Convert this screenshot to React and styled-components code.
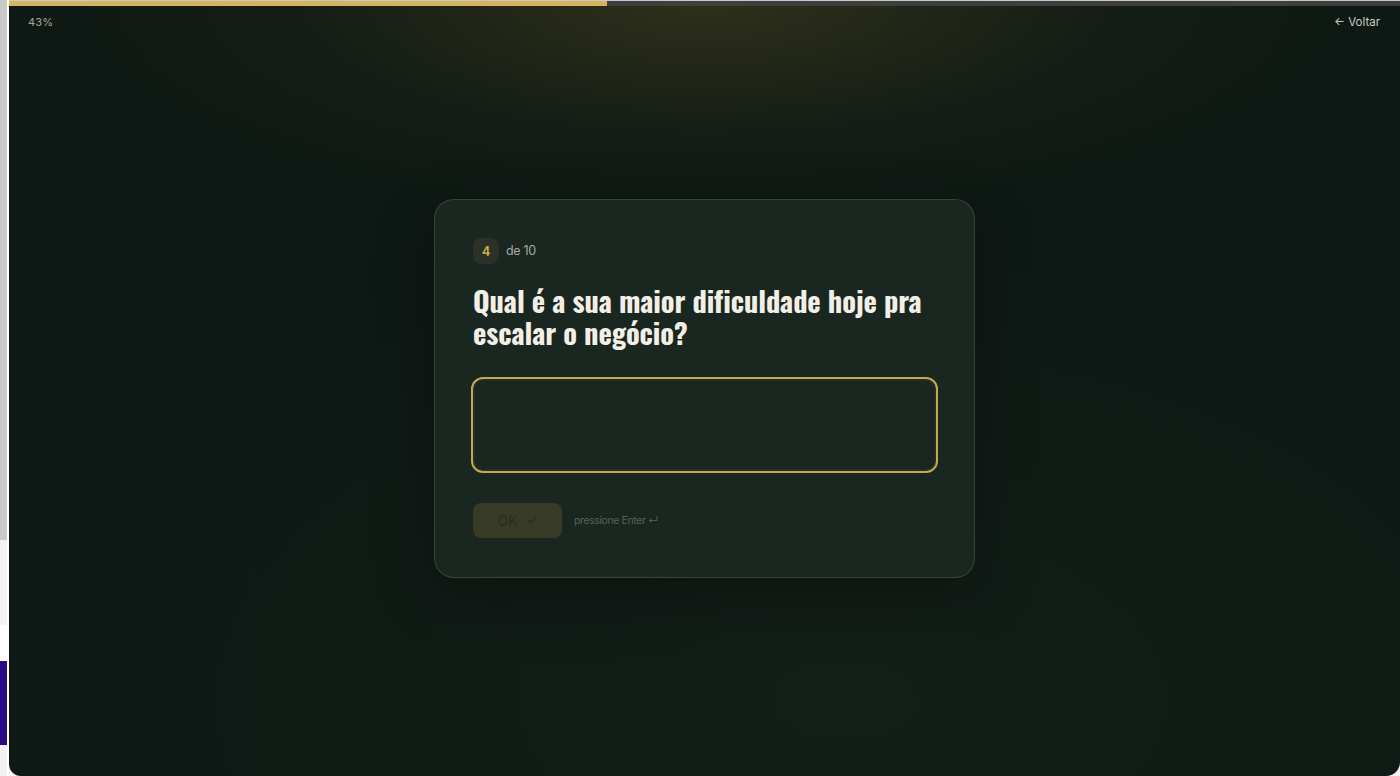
import React, { useState } from "react";
import styled, { createGlobalStyle } from "styled-components";

const GlobalStyle = createGlobalStyle`
  html, body, #root {
    margin: 0;
    padding: 0;
    height: 100%;
  }
  body {
    background: #f4f4f4;
    font-family: Inter, "Noto Sans", sans-serif;
    overflow: hidden;
  }
  * {
    box-sizing: border-box;
  }
`;

const Screen = styled.div`
  display: flex;
  height: 776px;
  width: 1400px;
`;

const Desktop = styled.div`
  width: 9px;
  flex-shrink: 0;
  display: flex;
  flex-direction: column;
  background: #ffffff;
  border-right: 2px solid #ffffff;
`;

const DesktopPart = styled.div`
  height: ${(props) => props.h}px;
  background: ${(props) => props.bg};
  border-bottom-right-radius: ${(props) => props.radius || 0}px;
`;

const Frame = styled.main`
  position: relative;
  flex: 1;
  display: flex;
  flex-direction: column;
  border-bottom-left-radius: 12px;
  border-bottom-right-radius: 14px;
  overflow: hidden;
  background:
    radial-gradient(ellipse 700px 230px at 50% 0%, rgba(120, 100, 40, 0.32), rgba(60, 60, 30, 0.12) 60%, transparent 100%),
    radial-gradient(ellipse 900px 500px at 60% 90%, rgba(30, 42, 32, 0.35), transparent 100%),
    #0e1814;
`;

const ProgressTrack = styled.div`
  height: 6px;
  background: #3c3f3b;
  border-top: 1px solid #c9c9c9;
`;

const ProgressFill = styled.div`
  height: 100%;
  background: #d4b45c;
`;

const TopBar = styled.div`
  display: flex;
  justify-content: space-between;
  align-items: center;
  padding: 9px 20px 0 19px;
  font-size: 11px;
  color: #a3a79c;
`;

const Percent = styled.span`
  letter-spacing: 0.2px;
`;

const BackLink = styled.button`
  background: none;
  border: none;
  padding: 0;
  font: inherit;
  font-size: 11.5px;
  color: #c8cac1;
  cursor: pointer;
`;

const Stage = styled.div`
  flex: 1;
  display: flex;
  align-items: center;
  justify-content: center;
  padding-bottom: 29px;
`;

const Card = styled.section`
  width: 541px;
  padding: 38px 38px 39px 38px;
  border-radius: 20px;
  background: #1a2620;
  border: 1px solid rgba(190, 170, 100, 0.22);
  box-shadow: 0 20px 60px rgba(0, 0, 0, 0.3);
  display: flex;
  flex-direction: column;
`;

const StepRow = styled.div`
  display: flex;
  align-items: center;
  gap: 7px;
`;

const StepBadge = styled.span`
  width: 26px;
  height: 26px;
  border-radius: 8px;
  background: #2b3126;
  color: #cfae4f;
  font-size: 13px;
  font-weight: 600;
  display: flex;
  align-items: center;
  justify-content: center;
`;

const StepTotal = styled.span`
  font-size: 12.5px;
  letter-spacing: -0.3px;
  color: #a8aba0;
`;

const Question = styled.h1`
  margin: 20px 0 0 0;
  font-family: Oswald, "Liberation Sans Narrow", "DejaVu Sans Condensed", sans-serif;
  font-weight: 700;
  font-size: 28.5px;
  line-height: 32px;
  color: #f2efe6;
  letter-spacing: -0.1px;
  white-space: nowrap;
`;

const Answer = styled.textarea`
  flex-shrink: 0;
  margin: 29px 0 0 -2px;
  width: 467px;
  height: 96px;
  resize: none;
  border-radius: 12px;
  border: 2px solid #c8a84c;
  box-shadow: inset 0 0 0 2px rgba(255, 255, 255, 0.04);
  background: #1b2621;
  color: #eae6da;
  font: inherit;
  font-size: 15px;
  padding: 14px 16px;
  outline: none;
`;

const Actions = styled.div`
  display: flex;
  align-items: center;
  gap: 12px;
  margin-top: 30px;
`;

const OkButton = styled.button`
  width: 89px;
  height: 35px;
  border: none;
  border-radius: 8px;
  background: #383b26;
  color: #262e20;
  font-family: inherit;
  font-size: 14px;
  display: flex;
  align-items: center;
  justify-content: center;
  gap: 8px;
`;

const Hint = styled.span`
  font-size: 10.5px;
  letter-spacing: -0.4px;
  color: #596158;
`;

export default function App() {
  const [value, setValue] = useState("");
  const progress = 43;

  return (
    <>
      <GlobalStyle />
      <Screen>
        <Desktop>
          <DesktopPart h={540} bg="#c9c9c9" />
          <DesktopPart h={85} bg="#f4f4f4" />
          <DesktopPart h={36} bg="#ffffff" radius={6} />
          <DesktopPart h={84} bg="#2a0a82" />
          <DesktopPart h={31} bg="#f2f2f6" />
        </Desktop>
        <Frame>
          <ProgressTrack>
            <ProgressFill style={{ width: `${progress}%` }} />
          </ProgressTrack>
          <TopBar>
            <Percent>{progress}%</Percent>
            <BackLink>← Voltar</BackLink>
          </TopBar>
          <Stage>
            <Card>
              <StepRow>
                <StepBadge>4</StepBadge>
                <StepTotal>de 10</StepTotal>
              </StepRow>
              <Question>
                Qual é a sua maior dificuldade hoje pra
                <br />
                escalar o negócio?
              </Question>
              <Answer value={value} onChange={(e) => setValue(e.target.value)} />
              <Actions>
                <OkButton>
                  OK
                  <svg width="12" height="12" viewBox="0 0 24 24" fill="none" stroke="currentColor" strokeWidth="2.4" strokeLinecap="round" strokeLinejoin="round">
                    <path d="M4 12.5l5 5L20 6.5" />
                  </svg>
                </OkButton>
                <Hint>pressione Enter ↵</Hint>
              </Actions>
            </Card>
          </Stage>
        </Frame>
      </Screen>
    </>
  );
}
